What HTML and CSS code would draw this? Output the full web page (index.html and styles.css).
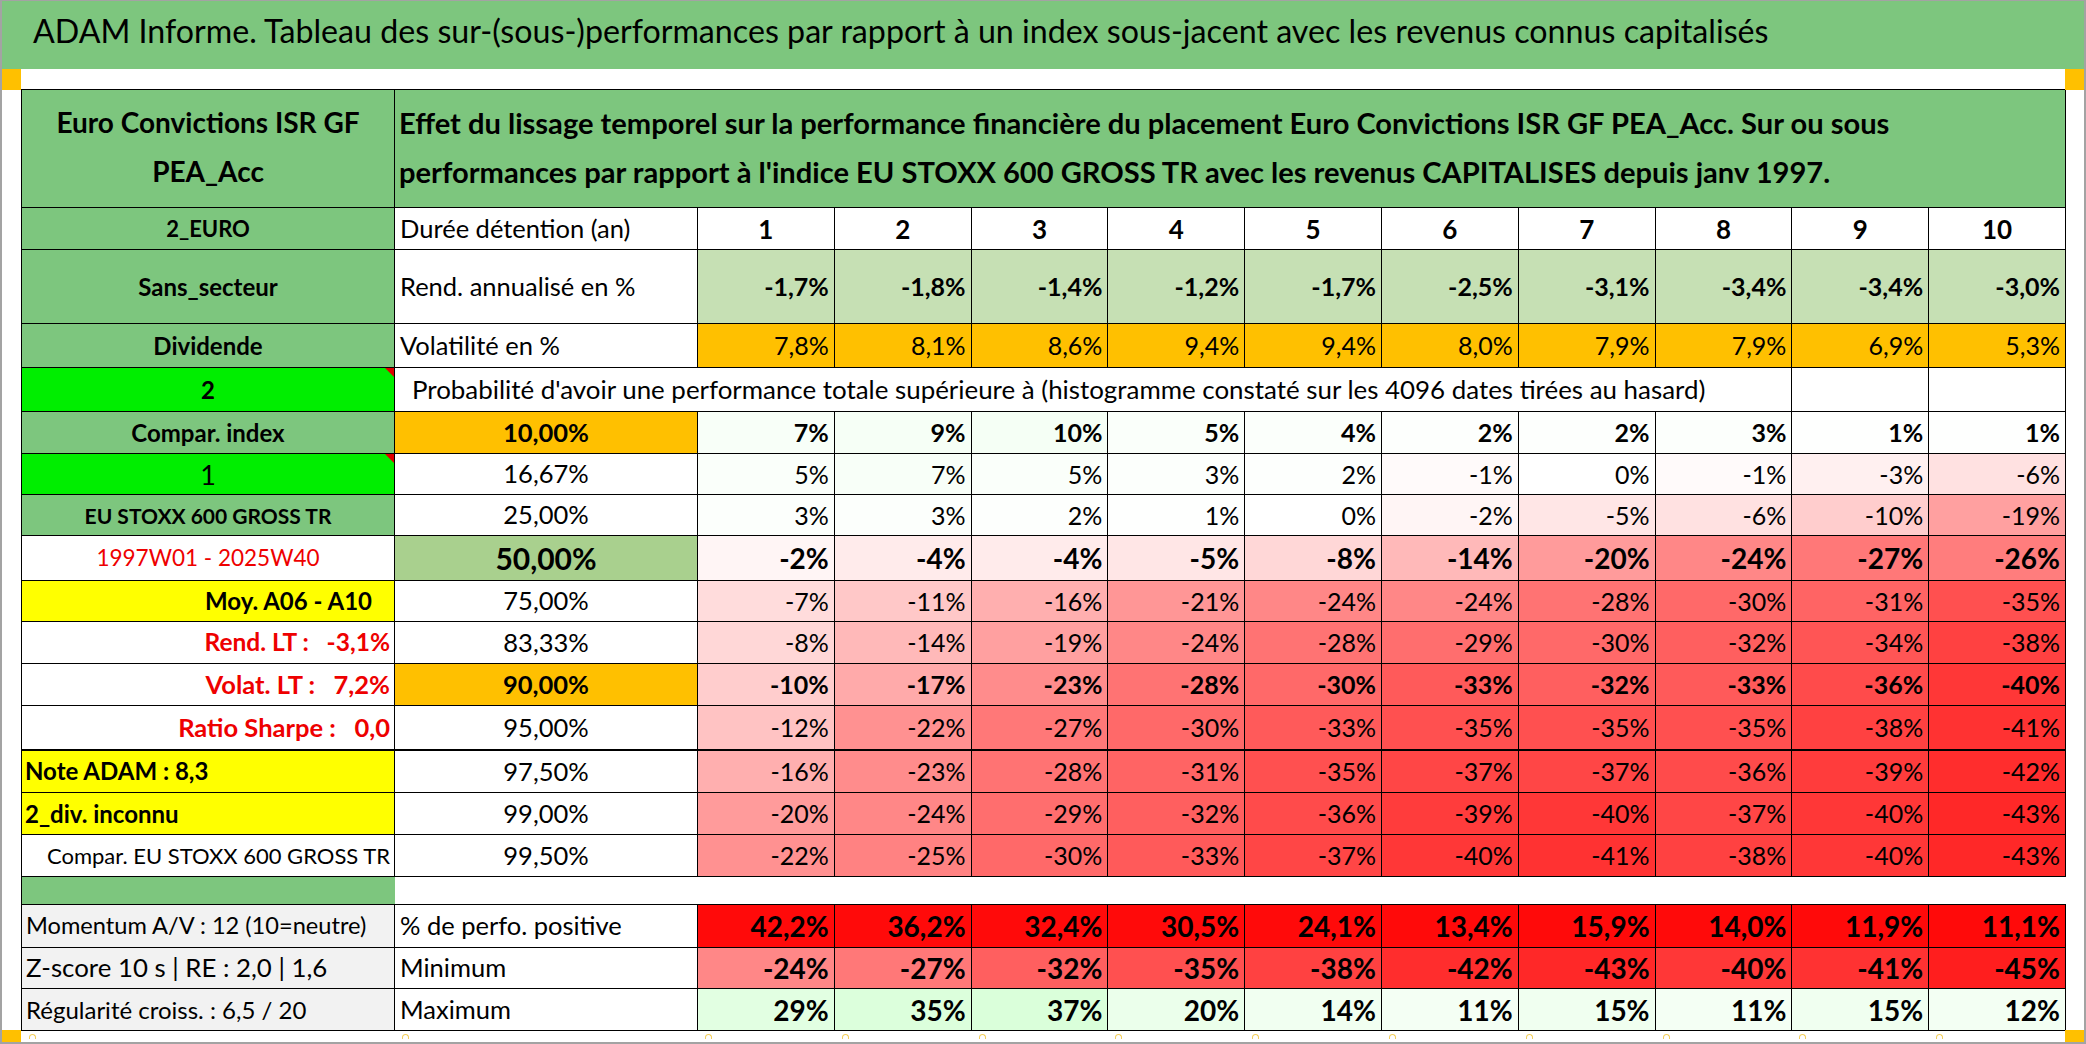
FILE: index.html
```html
<!DOCTYPE html>
<html lang="fr">
<head>
<meta charset="utf-8">
<title>ADAM Informe</title>
<link rel="stylesheet" href="styles.css">
</head>
<body>
<div class="sheet">
  <div class="title">ADAM Informe. Tableau des sur-(sous-)performances par rapport à un index sous-jacent avec les revenus connus capitalisés</div>
  <div class="main">
    <div class="gutter gutter-l"><span class="mark mark-top"></span><span class="mark mark-bot"></span></div>
    <div class="center">
      <div class="gap"></div>
      <table class="grid">
        <colgroup>
          <col class="w1"><col class="w2">
          <col class="wv"><col class="wv"><col class="wv"><col class="wv"><col class="wv">
          <col class="wv"><col class="wv"><col class="wv"><col class="wv"><col class="wv">
        </colgroup>
        <tr class="r-head">
          <td class="c-green b tc head head-l">Euro Convictions ISR GF<br>PEA_Acc</td>
          <td class="c-green b tl head head-r" colspan="11">Effet du lissage temporel sur la performance financière du placement Euro Convictions ISR GF PEA_Acc. Sur ou sous<br>performances par rapport à l'indice EU STOXX 600 GROSS TR avec les revenus CAPITALISES depuis janv 1997.</td>
        </tr>
        <tr class="h42">
          <td class="c-green b tc lab-s">2_EURO</td>
          <td class="tl lab2">Durée détention (an)</td>
          <td class="b tc num">1</td><td class="b tc num">2</td><td class="b tc num">3</td><td class="b tc num">4</td><td class="b tc num">5</td>
          <td class="b tc num">6</td><td class="b tc num">7</td><td class="b tc num">8</td><td class="b tc num">9</td><td class="b tc num">10</td>
        </tr>
        <tr class="h74">
          <td class="c-green b tc lab">Sans_secteur</td>
          <td class="tl lab2">Rend. annualisé en %</td>
          <td class="c-lgreen b v">-1,7%</td><td class="c-lgreen b v">-1,8%</td><td class="c-lgreen b v">-1,4%</td><td class="c-lgreen b v">-1,2%</td><td class="c-lgreen b v">-1,7%</td>
          <td class="c-lgreen b v">-2,5%</td><td class="c-lgreen b v">-3,1%</td><td class="c-lgreen b v">-3,4%</td><td class="c-lgreen b v">-3,4%</td><td class="c-lgreen b v">-3,0%</td>
        </tr>
        <tr class="h44">
          <td class="c-green b tc lab">Dividende</td>
          <td class="tl lab2">Volatilité en %</td>
          <td class="c-orange v">7,8%</td><td class="c-orange v">8,1%</td><td class="c-orange v">8,6%</td><td class="c-orange v">9,4%</td><td class="c-orange v">9,4%</td>
          <td class="c-orange v">8,0%</td><td class="c-orange v">7,9%</td><td class="c-orange v">7,9%</td><td class="c-orange v">6,9%</td><td class="c-orange v">5,3%</td>
        </tr>
        <tr class="h44">
          <td class="c-lime b tc lab note">2</td>
          <td class="tl prob" colspan="9">Probabilité d'avoir une performance totale supérieure à (histogramme constaté sur les 4096 dates tirées au hasard)</td>
          <td></td><td></td>
        </tr>
        <tr class="h42">
          <td class="c-green b tc lab">Compar. index</td>
          <td class="c-orange b tc pct">10,00%</td>
          <td class="b v" style="background:#f8fff8">7%</td><td class="b v" style="background:#f6fff6">9%</td><td class="b v" style="background:#f5fff5">10%</td><td class="b v" style="background:#fafffa">5%</td><td class="b v" style="background:#fbfffb">4%</td>
          <td class="b v" style="background:#fdfffd">2%</td><td class="b v" style="background:#fdfffd">2%</td><td class="b v" style="background:#fcfffc">3%</td><td class="b v" style="background:#fefffe">1%</td><td class="b v" style="background:#fefffe">1%</td>
        </tr>
        <tr class="h41">
          <td class="c-lime tc lab-one note">1</td>
          <td class="tc pct">16,67%</td>
          <td class="v" style="background:#fafffa">5%</td><td class="v" style="background:#f8fff8">7%</td><td class="v" style="background:#fafffa">5%</td><td class="v" style="background:#fcfffc">3%</td><td class="v" style="background:#fdfffd">2%</td>
          <td class="v" style="background:#fffafa">-1%</td><td class="v">0%</td><td class="v" style="background:#fffafa">-1%</td><td class="v" style="background:#fff0f0">-3%</td><td class="v" style="background:#ffe1e1">-6%</td>
        </tr>
        <tr class="h41">
          <td class="c-green b tc lab-xs">EU STOXX 600 GROSS TR</td>
          <td class="tc pct">25,00%</td>
          <td class="v" style="background:#fcfffc">3%</td><td class="v" style="background:#fcfffc">3%</td><td class="v" style="background:#fdfffd">2%</td><td class="v" style="background:#fefffe">1%</td><td class="v">0%</td>
          <td class="v" style="background:#fff5f5">-2%</td><td class="v" style="background:#ffe6e6">-5%</td><td class="v" style="background:#ffe1e1">-6%</td><td class="v" style="background:#ffcdcd">-10%</td><td class="v" style="background:#ffa0a0">-19%</td>
        </tr>
        <tr class="h45">
          <td class="tc lab-date red">1997W01 - 2025W40</td>
          <td class="c-mgreen b tc pct-big">50,00%</td>
          <td class="b v big" style="background:#fff5f5">-2%</td><td class="b v big" style="background:#ffebeb">-4%</td><td class="b v big" style="background:#ffebeb">-4%</td><td class="b v big" style="background:#ffe6e6">-5%</td><td class="b v big" style="background:#ffd7d7">-8%</td>
          <td class="b v big" style="background:#ffb9b9">-14%</td><td class="b v big" style="background:#ff9b9b">-20%</td><td class="b v big" style="background:#ff8787">-24%</td><td class="b v big" style="background:#ff7878">-27%</td><td class="b v big" style="background:#ff7d7d">-26%</td>
        </tr>
        <tr class="h41">
          <td class="c-yellow b tr lab moy">Moy. A06 - A10</td>
          <td class="tc pct">75,00%</td>
          <td class="v" style="background:#ffdcdc">-7%</td><td class="v" style="background:#ffc8c8">-11%</td><td class="v" style="background:#ffafaf">-16%</td><td class="v" style="background:#ff9696">-21%</td><td class="v" style="background:#ff8787">-24%</td>
          <td class="v" style="background:#ff8787">-24%</td><td class="v" style="background:#ff7373">-28%</td><td class="v" style="background:#ff6969">-30%</td><td class="v" style="background:#ff6464">-31%</td><td class="v" style="background:#ff5050">-35%</td>
        </tr>
        <tr class="h42">
          <td class="tr lab-lt lab-rend red b pre">Rend. LT :   -3,1%</td>
          <td class="tc pct">83,33%</td>
          <td class="v" style="background:#ffd7d7">-8%</td><td class="v" style="background:#ffb9b9">-14%</td><td class="v" style="background:#ffa0a0">-19%</td><td class="v" style="background:#ff8787">-24%</td><td class="v" style="background:#ff7373">-28%</td>
          <td class="v" style="background:#ff6e6e">-29%</td><td class="v" style="background:#ff6969">-30%</td><td class="v" style="background:#ff5f5f">-32%</td><td class="v" style="background:#ff5555">-34%</td><td class="v" style="background:#ff4141">-38%</td>
        </tr>
        <tr class="h42">
          <td class="tr lab-lt red b pre">Volat. LT :   7,2%</td>
          <td class="c-orange b tc pct">90,00%</td>
          <td class="b v" style="background:#ffcdcd">-10%</td><td class="b v" style="background:#ffaaaa">-17%</td><td class="b v" style="background:#ff8c8c">-23%</td><td class="b v" style="background:#ff7373">-28%</td><td class="b v" style="background:#ff6969">-30%</td>
          <td class="b v" style="background:#ff5a5a">-33%</td><td class="b v" style="background:#ff5f5f">-32%</td><td class="b v" style="background:#ff5a5a">-33%</td><td class="b v" style="background:#ff4b4b">-36%</td><td class="b v" style="background:#ff3737">-40%</td>
        </tr>
        <tr class="h44 thick">
          <td class="tr lab-lt red b pre">Ratio Sharpe :   0,0</td>
          <td class="tc pct">95,00%</td>
          <td class="v" style="background:#ffc3c3">-12%</td><td class="v" style="background:#ff9191">-22%</td><td class="v" style="background:#ff7878">-27%</td><td class="v" style="background:#ff6969">-30%</td><td class="v" style="background:#ff5a5a">-33%</td>
          <td class="v" style="background:#ff5050">-35%</td><td class="v" style="background:#ff5050">-35%</td><td class="v" style="background:#ff5050">-35%</td><td class="v" style="background:#ff4141">-38%</td><td class="v" style="background:#ff3232">-41%</td>
        </tr>
        <tr class="h43">
          <td class="c-yellow b tl lab lab-note">Note ADAM : 8,3</td>
          <td class="tc pct">97,50%</td>
          <td class="v" style="background:#ffafaf">-16%</td><td class="v" style="background:#ff8c8c">-23%</td><td class="v" style="background:#ff7373">-28%</td><td class="v" style="background:#ff6464">-31%</td><td class="v" style="background:#ff5050">-35%</td>
          <td class="v" style="background:#ff4646">-37%</td><td class="v" style="background:#ff4646">-37%</td><td class="v" style="background:#ff4b4b">-36%</td><td class="v" style="background:#ff3c3c">-39%</td><td class="v" style="background:#ff2d2d">-42%</td>
        </tr>
        <tr class="h42">
          <td class="c-yellow b tl lab lab-note">2_div. inconnu</td>
          <td class="tc pct">99,00%</td>
          <td class="v" style="background:#ff9b9b">-20%</td><td class="v" style="background:#ff8787">-24%</td><td class="v" style="background:#ff6e6e">-29%</td><td class="v" style="background:#ff5f5f">-32%</td><td class="v" style="background:#ff4b4b">-36%</td>
          <td class="v" style="background:#ff3c3c">-39%</td><td class="v" style="background:#ff3737">-40%</td><td class="v" style="background:#ff4646">-37%</td><td class="v" style="background:#ff3737">-40%</td><td class="v" style="background:#ff2828">-43%</td>
        </tr>
        <tr class="h42">
          <td class="tr lab-c">Compar. EU STOXX 600 GROSS TR</td>
          <td class="tc pct">99,50%</td>
          <td class="v" style="background:#ff9191">-22%</td><td class="v" style="background:#ff8282">-25%</td><td class="v" style="background:#ff6969">-30%</td><td class="v" style="background:#ff5a5a">-33%</td><td class="v" style="background:#ff4646">-37%</td>
          <td class="v" style="background:#ff3737">-40%</td><td class="v" style="background:#ff3232">-41%</td><td class="v" style="background:#ff4141">-38%</td><td class="v" style="background:#ff3737">-40%</td><td class="v" style="background:#ff2828">-43%</td>
        </tr>
        <tr class="h28 blank">
          <td class="c-green"></td>
          <td class="nb" colspan="11"></td>
        </tr>
        <tr class="h43">
          <td class="c-grey tl lab-g lab-mom">Momentum A/V : 12 (10=neutre)</td>
          <td class="tl lab3">% de perfo. positive</td>
          <td class="c-red b v big">42,2%</td><td class="c-red b v big">36,2%</td><td class="c-red b v big">32,4%</td><td class="c-red b v big">30,5%</td><td class="c-red b v big">24,1%</td>
          <td class="c-red b v big">13,4%</td><td class="c-red b v big">15,9%</td><td class="c-red b v big">14,0%</td><td class="c-red b v big">11,9%</td><td class="c-red b v big">11,1%</td>
        </tr>
        <tr class="h41">
          <td class="c-grey tl lab-g lab-z">Z-score 10 s | RE : 2,0 | 1,6</td>
          <td class="tl lab3">Minimum</td>
          <td class="b v big" style="background:#ff8787">-24%</td><td class="b v big" style="background:#ff7878">-27%</td><td class="b v big" style="background:#ff5f5f">-32%</td><td class="b v big" style="background:#ff5050">-35%</td><td class="b v big" style="background:#ff4141">-38%</td>
          <td class="b v big" style="background:#ff2d2d">-42%</td><td class="b v big" style="background:#ff2828">-43%</td><td class="b v big" style="background:#ff3737">-40%</td><td class="b v big" style="background:#ff3232">-41%</td><td class="b v big" style="background:#ff1e1e">-45%</td>
        </tr>
        <tr class="h42">
          <td class="c-grey tl lab-g">Régularité croiss. : 6,5 / 20</td>
          <td class="tl lab3">Maximum</td>
          <td class="b v big" style="background:#e2ffe2">29%</td><td class="b v big" style="background:#dcffdc">35%</td><td class="b v big" style="background:#daffda">37%</td><td class="b v big" style="background:#ebffeb">20%</td><td class="b v big" style="background:#f1fff1">14%</td>
          <td class="b v big" style="background:#f4fff4">11%</td><td class="b v big" style="background:#f0fff0">15%</td><td class="b v big" style="background:#f4fff4">11%</td><td class="b v big" style="background:#f0fff0">15%</td><td class="b v big" style="background:#f3fff3">12%</td>
        </tr>
      </table>
      <div class="foot">
        <span class="fcell"><i class="tick"></i></span><span class="fcell"><i class="tick"></i></span>
        <span class="fcell"><i class="tick"></i></span><span class="fcell"><i class="tick"></i></span>
        <span class="fcell"><i class="tick"></i></span><span class="fcell"><i class="tick"></i></span>
        <span class="fcell"><i class="tick"></i></span><span class="fcell"><i class="tick"></i></span>
        <span class="fcell"><i class="tick"></i></span><span class="fcell"><i class="tick"></i></span>
        <span class="fcell"><i class="tick"></i></span><span class="fcell"><i class="tick"></i></span>
      </div>
    </div>
    <div class="gutter gutter-r"><span class="mark mark-top"></span><span class="mark mark-bot"></span></div>
  </div>
</div>
</body>
</html>
```

FILE: styles.css
```css
html, body {
  margin: 0;
  padding: 0;
  background: #ffffff;
}

body {
  font-family: Lato, "Open Sans", "DejaVu Sans", sans-serif;
  color: #000000;
}

.sheet {
  width: 2086px;
  height: 1044px;
  box-sizing: border-box;
  border: 2px solid #a3a3a3;
  border-top-width: 1px;
  display: flex;
  flex-direction: column;
  overflow: hidden;
}

.title {
  height: 68px;
  box-sizing: border-box;
  flex: none;
  background: #7dc67e;
  font-size: 32.2px;
  padding: 0 0 9px 31px;
  display: flex;
  align-items: center;
  white-space: nowrap;
}

.main {
  flex: 1;
  display: flex;
  min-height: 0;
}

.gutter {
  width: 19px;
  flex: none;
  display: flex;
  flex-direction: column;
  justify-content: space-between;
}

.mark {
  display: block;
  background: #ffc000;
}

.gutter-l .mark {
  width: 21px;
  margin-left: -2px;
}

.gutter-r .mark {
  width: 19px;
}

.mark-top {
  height: 21px;
}

.mark-bot {
  height: 12px;
}

.center {
  width: 2044px;
  flex: none;
  display: flex;
  flex-direction: column;
}

.gap {
  height: 20px;
  flex: none;
}

.foot {
  flex: 1;
  display: grid;
  grid-template-columns: 373px 303px repeat(10, 1fr);
  align-items: start;
}

.fcell {
  display: block;
  padding: 3px 0 0 8px;
}

.tick {
  display: block;
  width: 5px;
  height: 4px;
  border: 1.5px solid #f3cf5a;
  border-bottom: none;
  border-radius: 4px 4px 0 0;
}

/* ---------- grid ---------- */
.grid {
  border-collapse: collapse;
  table-layout: fixed;
  width: 2044px;
}

.w1 { width: 373px; }
.w2 { width: 303px; }
.wv { width: 136.8px; }

.grid td {
  border: 1px solid #000000;
  padding: 0 5px;
  white-space: nowrap;
  overflow: hidden;
  font-size: 25px;
  line-height: 1;
  vertical-align: middle;
  position: relative;
}

.r-head { height: 118px; }
.h28 { height: 28px; }
.h41 { height: 41px; }
.h42 { height: 42px; }
.h43 { height: 43px; }
.h44 { height: 44px; }
.h45 { height: 45px; }
.h74 { height: 74px; }

.thick td {
  border-bottom: 2px solid #000000;
}

.b { font-weight: 700; }
.tc { text-align: center; }
.tl { text-align: left; }
.tr { text-align: right; }
.pre { white-space: pre !important; }

.c-green { background: #7dc67e; }
.c-lime { background: #00ee00; }
.c-yellow { background: #ffff00; }
.c-grey { background: #f2f2f2; }
.c-orange { background: #ffc000; }
.c-lgreen { background: #c6e0b4; }
.c-mgreen { background: #a9d08e; }
.c-red { background: #ff0a0a; }
.red { color: #ee0000; }

.grid td.head {
  font-size: 29.1px;
  line-height: 49px;
  padding-bottom: 4px;
}

.grid td.head-l {
  font-size: 28px;
}

.grid td.head-r {
  padding-left: 4px;
}

.grid td.lab { font-size: 24px; }
.grid td.lab-note { padding-left: 3px; }
.grid td.lab-s { font-size: 22px; }
.grid td.lab-xs { font-size: 21px; }
.grid td.lab-one { font-size: 27px; }
.grid td.lab-date { font-size: 22.5px; }
.grid td.lab-lt { font-size: 25.5px; padding-right: 4px; }
.grid td.lab-rend { font-size: 24.5px; }
.grid td.lab-c { font-size: 22px; padding-right: 4px; }
.grid td.lab-g { font-size: 24px; padding-left: 4px; }
.grid td.lab-mom { font-size: 23.6px; }
.grid td.lab-z { font-size: 25.8px; }
.grid td.lab2 { font-size: 25.5px; padding-left: 5px; }
.grid td.lab3 { font-size: 25.5px; padding-left: 5px; }
.grid td.moy { padding-right: 22px; }

.grid td.num { font-size: 26px; }
.grid td.v {
  text-align: right;
  padding-right: 5px;
  font-size: 25px;
}
.grid td.big { font-size: 28px; }
.grid td.pct { font-size: 25.5px; }
.grid td.pct-big { font-size: 30px; }
.grid td.prob {
  font-size: 25.9px;
  padding-left: 17px;
}

.grid td.note::after {
  content: "";
  position: absolute;
  top: 0;
  right: 0;
  border-style: solid;
  border-width: 0 9px 9px 0;
  border-color: transparent #e00000 transparent transparent;
}

.blank td {
  border-left: none;
  border-right: none;
}

.blank td.c-green {
  border-left: 1px solid #000000;
}

.grid td.nb {
  border-right: 1px solid transparent;
}
```
